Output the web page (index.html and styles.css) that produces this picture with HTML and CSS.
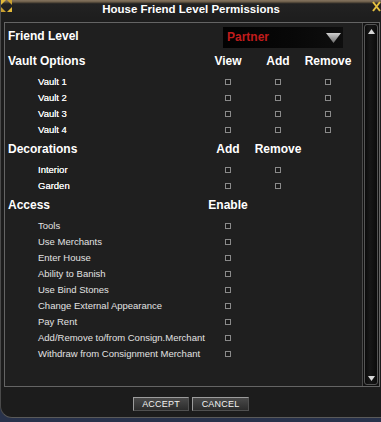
FILE: index.html
```html
<!DOCTYPE html>
<html>
<head>
<meta charset="utf-8">
<title>House Friend Level Permissions</title>
<link rel="stylesheet" href="styles.css">
</head>
<body>
<div class="window">
  <div class="titlebar">
    <h1 class="title">House Friend Level Permissions</h1>
    <svg class="corner-tl" width="11" height="12" viewBox="0 0 11 12">
      <polygon points="0,0 5,0 0,5" fill="#e2b93a"/>
      <polygon points="11,12 6,12 11,7" fill="#e2b93a"/>
      <polygon points="11,0 6,0 11,5" fill="#c9a030"/>
      <polygon points="0,12 5,12 0,7" fill="#c9a030"/>
    </svg>
    <svg class="corner-tr" width="9" height="11" viewBox="0 0 9 11">
      <path d="M1 1 L8 10 M8 1 L1 10" stroke="#e4c040" stroke-width="2" fill="none"/>
    </svg>
  </div>

  <div class="panel">
    <div class="content">
      <div class="friend-row">
        <span class="label head">Friend Level</span>
        <div class="dropdown">
          <span class="dd-value">Partner</span>
          <svg class="dd-arrow" width="15" height="10" viewBox="0 0 15 10">
            <defs>
              <linearGradient id="ag" x1="0" y1="0" x2="0" y2="1">
                <stop offset="0" stop-color="#cfcfcf"/>
                <stop offset="1" stop-color="#6c6c6c"/>
              </linearGradient>
            </defs>
            <polygon points="0,0 15,0 7.5,10" fill="url(#ag)"/>
          </svg>
        </div>
      </div>

      <section class="section first">
        <div class="row head-row">
          <span class="label head">Vault Options</span>
          <span class="col head">View</span>
          <span class="col head">Add</span>
          <span class="col head">Remove</span>
        </div>
        <div class="items">
          <div class="row item"><span class="label">Vault 1</span><span class="col"><i class="cb"></i></span><span class="col"><i class="cb"></i></span><span class="col"><i class="cb"></i></span></div>
          <div class="row item"><span class="label">Vault 2</span><span class="col"><i class="cb"></i></span><span class="col"><i class="cb"></i></span><span class="col"><i class="cb"></i></span></div>
          <div class="row item"><span class="label">Vault 3</span><span class="col"><i class="cb"></i></span><span class="col"><i class="cb"></i></span><span class="col"><i class="cb"></i></span></div>
          <div class="row item"><span class="label">Vault 4</span><span class="col"><i class="cb"></i></span><span class="col"><i class="cb"></i></span><span class="col"><i class="cb"></i></span></div>
        </div>
      </section>

      <section class="section">
        <div class="row head-row">
          <span class="label head">Decorations</span>
          <span class="col head">Add</span>
          <span class="col head">Remove</span>
        </div>
        <div class="items">
          <div class="row item"><span class="label">Interior</span><span class="col"><i class="cb"></i></span><span class="col"><i class="cb"></i></span></div>
          <div class="row item"><span class="label">Garden</span><span class="col"><i class="cb"></i></span><span class="col"><i class="cb"></i></span></div>
        </div>
      </section>

      <section class="section">
        <div class="row head-row">
          <span class="label head">Access</span>
          <span class="col head">Enable</span>
        </div>
        <div class="items access">
          <div class="row item"><span class="label">Tools</span><span class="col"><i class="cb"></i></span></div>
          <div class="row item"><span class="label">Use Merchants</span><span class="col"><i class="cb"></i></span></div>
          <div class="row item"><span class="label">Enter House</span><span class="col"><i class="cb"></i></span></div>
          <div class="row item"><span class="label">Ability to Banish</span><span class="col"><i class="cb"></i></span></div>
          <div class="row item"><span class="label">Use Bind Stones</span><span class="col"><i class="cb"></i></span></div>
          <div class="row item"><span class="label">Change External Appearance</span><span class="col"><i class="cb"></i></span></div>
          <div class="row item"><span class="label">Pay Rent</span><span class="col"><i class="cb"></i></span></div>
          <div class="row item"><span class="label">Add/Remove to/from Consign.Merchant</span><span class="col"><i class="cb"></i></span></div>
          <div class="row item"><span class="label">Withdraw from Consignment Merchant</span><span class="col"><i class="cb"></i></span></div>
        </div>
      </section>
    </div>

    <div class="scrollbar">
      <div class="thumb">
        <svg class="sb-arrow" width="7" height="5" viewBox="0 0 7 5"><polygon points="3.5,0 7,5 0,5" fill="#d8d8d8"/></svg>
        <svg class="sb-arrow" width="7" height="5" viewBox="0 0 7 5"><polygon points="0,0 7,0 3.5,5" fill="#d8d8d8"/></svg>
      </div>
    </div>
  </div>

  <div class="footer">
    <button class="btn accept">ACCEPT</button>
    <button class="btn cancel">CANCEL</button>
  </div>
</div>
<div class="under"></div>
</body>
</html>
```

FILE: styles.css
```css
* {
  box-sizing: border-box;
  margin: 0;
  padding: 0;
}

html,
body {
  width: 381px;
  height: 422px;
  overflow: hidden;
  background: #28324b;
}

body {
  font-family: "Liberation Sans", Arial, sans-serif;
  color: #e8e8e8;
}

.window {
  height: 418px;
  display: flex;
  flex-direction: column;
  position: relative;
  background: #1c1c1c;
  border-left: 1px solid #4a4a4a;
  border-bottom: 1px solid #5a5a5a;
  border-bottom-left-radius: 12px;
}

/* ---------- title bar ---------- */
.titlebar {
  height: 22px;
  flex: 0 0 22px;
  position: relative;
  background: linear-gradient(#857560 0, #6a5c48 2px, #3a342c 3px, #222222 4px, #1d1d1d 100%);
}

.title {
  font-size: 11.5px;
  font-weight: bold;
  line-height: 19px;
  text-align: center;
  color: #ffffff;
}

.corner-tl {
  position: absolute;
  left: 0;
  top: 0;
}

.corner-tr {
  position: absolute;
  right: 0;
  top: 1px;
}

/* ---------- panel ---------- */
.panel {
  height: 365px;
  flex: 0 0 365px;
  margin: 0 1px 0 3px;
  border: 1px solid #646464;
  display: flex;
  background: #1f1f1f;
}

.content {
  flex: 1;
  padding-top: 4px;
}

.label {
  display: block;
  line-height: 16px;
  white-space: nowrap;
}

.head {
  font-size: 12px;
  font-weight: bold;
  color: #ffffff;
  line-height: 16px;
}

.label.head {
  padding-left: 3px;
}

/* friend level row */
.friend-row {
  display: flex;
  height: 21px;
}

.friend-row .label {
  flex: 0 0 218px;
  padding-top: 1px;
}

.dropdown {
  width: 120px;
  height: 21px;
  display: flex;
  align-items: center;
  justify-content: space-between;
  padding: 0 2px 0 4px;
  background: linear-gradient(90deg, #020202, #080808 60%, #0e0e0e);
}

.dd-value {
  font-size: 12px;
  font-weight: bold;
  color: #c01c1c;
  line-height: 21px;
}

.dd-arrow {
  display: block;
}

/* sections */
.section {
  margin-top: 3px;
}

.section.first {
  margin-top: 5px;
}

.row {
  display: grid;
  grid-template-columns: 198px 50px 50px 50px;
  height: 16px;
  align-items: center;
}

.col {
  text-align: center;
}

.items {
  margin-top: 5px;
}

.item .label {
  padding-left: 33px;
  font-size: 9.5px;
  color: #f4f4f4;
  text-shadow: 0 0 0.4px #ffffff;
}

.access .item .label {
  color: #e2e2e2;
  text-shadow: none;
}

.cb {
  display: block;
  width: 6px;
  height: 6px;
  margin: 0 auto;
  border: 1px solid #8a8a8a;
  background: #1a1a1a;
}

/* scrollbar */
.scrollbar {
  flex: 0 0 17px;
  width: 17px;
  padding: 1px 0;
  display: flex;
  flex-direction: column;
  border-left: 1px solid #4a4a4a;
  background: #111111;
}

.thumb {
  flex: 1;
  margin: 0 1px;
  border: 1px solid #555555;
  border-radius: 3px;
  background: linear-gradient(90deg, #0b0b0b, #171717 40%, #0b0b0b);
  display: flex;
  flex-direction: column;
  justify-content: space-between;
  align-items: center;
  padding: 4px 0 3px;
}

.sb-arrow {
  display: block;
}

/* footer */
.footer {
  flex: 1;
  display: flex;
  justify-content: center;
  gap: 3px;
  padding-top: 10px;
}

.btn {
  height: 14px;
  font-family: "Liberation Sans", Arial, sans-serif;
  font-size: 9px;
  line-height: 12px;
  color: #f2f2f2;
  background: linear-gradient(#4a4a4a, #2c2c2c);
  border: 1px solid;
  border-color: #9c9c9c #505050 #505050 #9c9c9c;
  letter-spacing: 0.2px;
}

.accept {
  width: 56px;
}

.cancel {
  width: 57px;
}

.under {
  height: 4px;
  background: #28324b;
}
```
